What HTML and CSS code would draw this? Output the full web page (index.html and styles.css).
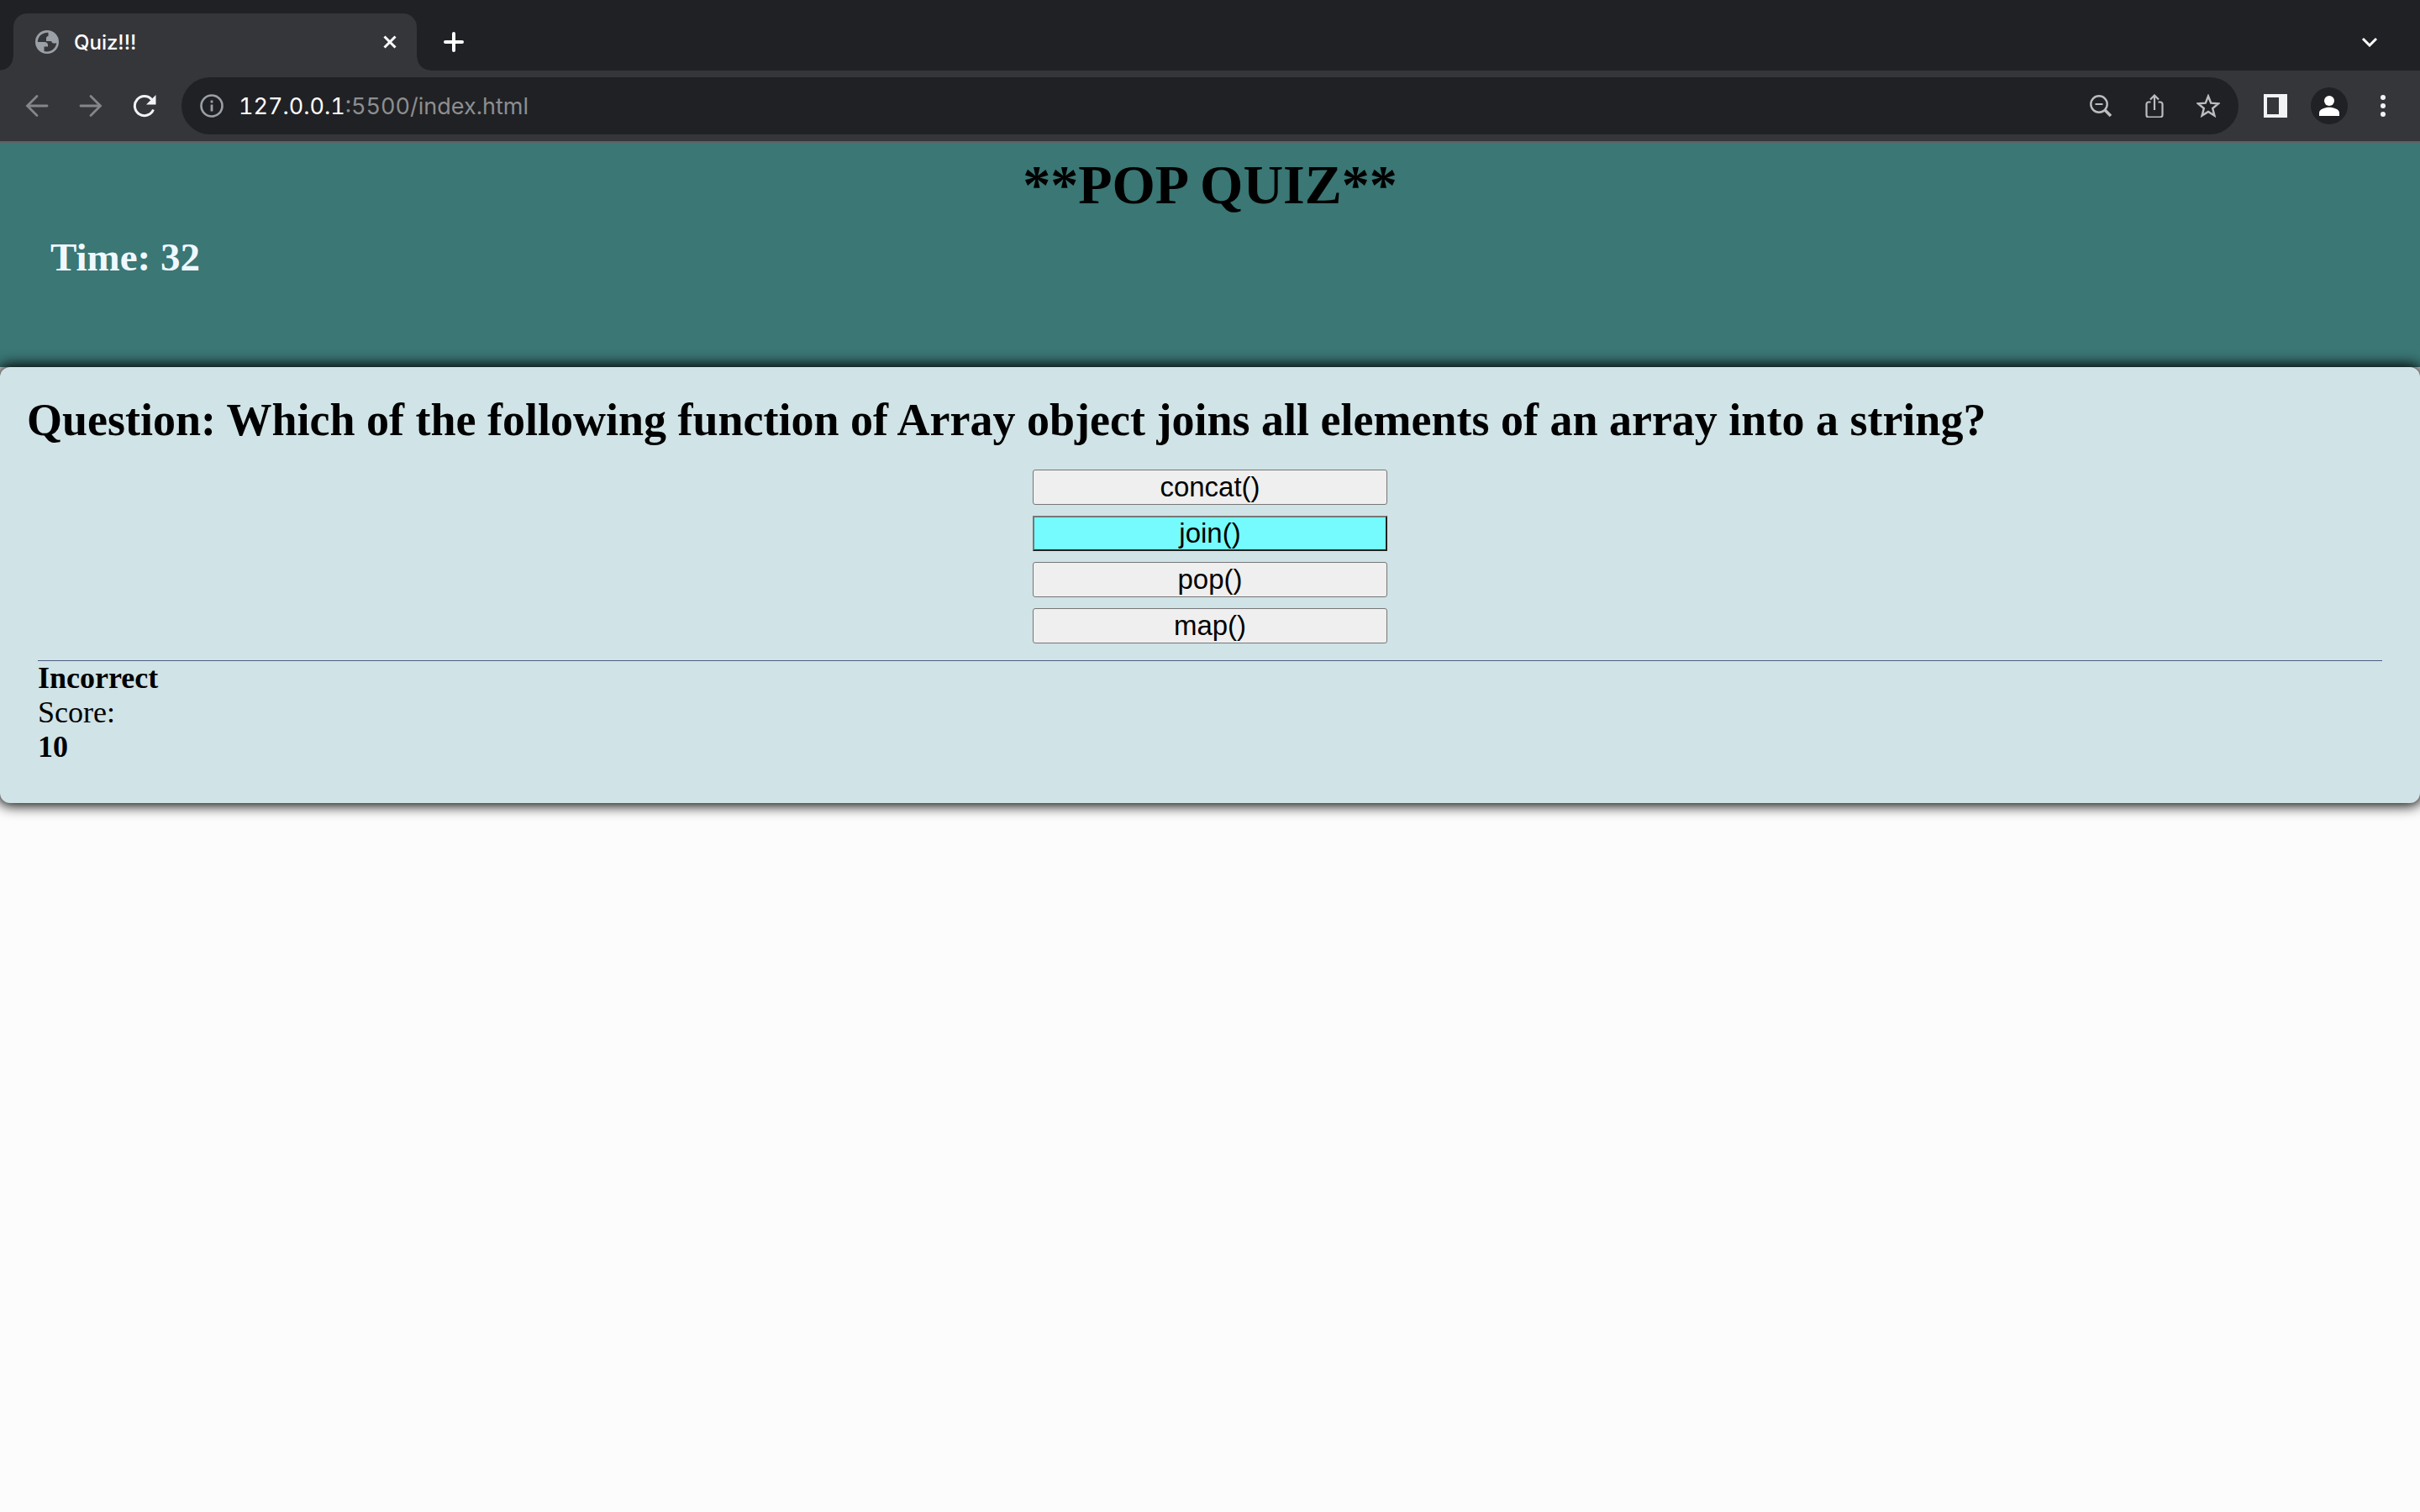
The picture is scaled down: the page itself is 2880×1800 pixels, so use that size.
FILE: index.html
```html
<!DOCTYPE html>
<html lang="en">
<head>
<meta charset="utf-8">
<title>Quiz!!!</title>
<link rel="stylesheet" href="styles.css">
</head>
<body>
<div class="browser">
  <div class="tab-strip">
    <div class="tab">
      <svg class="favicon" viewBox="0 0 28 28" aria-hidden="true"><circle cx="14" cy="14" r="14" fill="#9aa0a6"/><path d="M15.500 2.900C10 2.500 4 6 2.900 12.500V14H11c2.500 0 4 1.500 4 3.500v2h-4.500V25c6 1.800 14-2 14.800-10-1 .5-2 .8-3.300.6-2-.3-2.500-1.300-2.800-2.600H13V9.500c0-1.500 1-2.500 2.500-2.500z" fill="#35363a"/></svg>
      <span class="tab-title">Quiz!!!</span>
      <button class="tab-close" aria-label="Close tab"><svg viewBox="0 0 16 16"><path d="M1.500 1.500l13 13M14.500 1.500l-13 13" stroke="#fff" stroke-width="3"/></svg></button>
    </div>
    <button class="new-tab" aria-label="New tab"><svg viewBox="0 0 24 24"><path d="M12 2v20M2 12h20" stroke="#fff" stroke-width="4" stroke-linecap="round"/></svg></button>
    <button class="tab-search" aria-label="Search tabs"><svg viewBox="0 0 20 12"><path d="M2 2l8 8 8-8" fill="none" stroke="#fff" stroke-width="3"/></svg></button>
  </div>
  <div class="toolbar">
    <button class="tool" aria-label="Back"><svg viewBox="0 0 28 28"><path d="M26 14H3M14 2.500L2.500 14 14 25.500" fill="none" stroke="#85868a" stroke-width="2.800" stroke-linecap="round"/></svg></button>
    <button class="tool" aria-label="Forward"><svg viewBox="0 0 28 28"><path d="M2 14h23M14 2.500L25.500 14 14 25.500" fill="none" stroke="#85868a" stroke-width="2.800" stroke-linecap="round"/></svg></button>
    <button class="tool tool-reload" aria-label="Reload"><svg viewBox="0 0 28 28"><path d="M24.500 18.500A11.500 11.500 0 1 1 22.500 6.500" fill="none" stroke="#f1f3f4" stroke-width="3"/><path d="M27.500 1v11.500H16z" fill="#f1f3f4"/></svg></button>
    <div class="omnibox">
      <svg class="icon" viewBox="0 0 28 28" aria-hidden="true"><circle cx="14" cy="14" r="12.500" fill="none" stroke="#9aa0a6" stroke-width="2.600"/><path d="M14 12.500V20.500M14 7.500v3" stroke="#9aa0a6" stroke-width="2.800"/></svg>
      <div class="url"><span class="host">127.0.0.1</span>:5500/index.html</div>
      <button class="action" aria-label="Zoom out"><svg viewBox="0 0 28 28"><circle cx="12" cy="12" r="9.700" fill="none" stroke="#bdbdbf" stroke-width="2.400"/><path d="M7.500 12h9" stroke="#bdbdbf" stroke-width="2"/><path d="M19 19l7 7" stroke="#bdbdbf" stroke-width="3.600"/></svg></button>
      <button class="action" aria-label="Share"><svg viewBox="0 0 28 28"><path d="M9.500 9.500H7a2.500 2.500 0 0 0-2.500 2.500v13A2.500 2.500 0 0 0 7 27.500h14a2.500 2.500 0 0 0 2.500-2.500V12A2.500 2.500 0 0 0 21 9.500h-2.500M14 19V2M9 6.500l5-5 5 5" fill="none" stroke="#bdbdbf" stroke-width="2.200"/></svg></button>
      <button class="action" aria-label="Bookmark"><svg viewBox="0 0 28 28"><path d="M14 2.500l3.200 8.200 8.800.6-6.800 5.700 2.200 8.600-7.400-4.700-7.400 4.700L8.800 17 2 11.300l8.800-.6z" fill="none" stroke="#bdbdbf" stroke-width="2.400"/></svg></button>
    </div>
    <button class="tool tool-panel" aria-label="Side panel"><svg viewBox="0 0 28 28"><path fill-rule="evenodd" d="M0 0h28v28H0zM4 4v20h14V4z" fill="#f1f3f4"/></svg></button>
    <button class="profile" aria-label="Profile"><svg viewBox="0 0 24 24"><circle cx="12" cy="6" r="6" fill="#fff"/><path d="M0 24v-3.500C0 16 7 13.800 12 13.800S24 16 24 20.500V24z" fill="#fff"/></svg></button>
    <button class="tool tool-menu" aria-label="Menu"><svg viewBox="0 0 28 28"><g fill="#f1f3f4"><circle cx="14" cy="4" r="3"/><circle cx="14" cy="14" r="3"/><circle cx="14" cy="24" r="3"/></g></svg></button>
  </div>
</div>
<header class="banner">
  <h1 class="title">**POP QUIZ**</h1>
  <p class="timer">Time: 32</p>
</header>
<main class="card">
  <h2 class="question">Question: Which of the following function of Array object joins all elements of an array into a string?</h2>
  <div class="choices">
    <button class="choice">concat()</button>
    <button class="choice choice-active">join()</button>
    <button class="choice">pop()</button>
    <button class="choice">map()</button>
  </div>
  <div class="result">
    <p class="strong">Incorrect</p>
    <p>Score:</p>
    <p class="strong">10</p>
  </div>
</main>
</body>
</html>
```
FILE: styles.css
```css
* { box-sizing: border-box; }
body {
  min-height: 100vh;
  margin: 0;
  background: #fcfcfc;
  color: #000;
  font-family: "Liberation Serif", "Times New Roman", serif;
}
h1, h2, p { margin: 0; }
button { font: inherit; }
svg { display: block; }

.browser {
  background: #35363a;
  border-bottom: 2px solid #5f6064;
  font-family: Inter, sans-serif;
}
.browser button {
  display: flex;
  align-items: center;
  justify-content: center;
  flex: none;
  padding: 0;
  border: 0;
  background: none;
}
.tab-strip {
  display: flex;
  align-items: center;
  height: 84px;
  padding: 16px 50px 0 16px;
  background: #202124;
}
.tab {
  position: relative;
  display: flex;
  align-items: center;
  width: 480px;
  height: 68px;
  padding: 0 24px 0 26px;
  border-radius: 16px 16px 0 0;
  background: #35363a;
}
.tab::before, .tab::after {
  content: "";
  position: absolute;
  bottom: 0;
  width: 16px;
  height: 16px;
}
.tab::before { left: -16px; background: radial-gradient(circle at 0 0, #202124 15px, #35363a 16px); }
.tab::after { right: -16px; background: radial-gradient(circle at 100% 0, #202124 15px, #35363a 16px); }
.favicon { width: 28px; height: 28px; }
.tab-title { flex: 1; margin-left: 18px; color: #fff; font-size: 24px; font-weight: 500; }
.tab-close svg { width: 16px; height: 16px; }
.new-tab { margin-left: 32px; }
.new-tab svg { width: 24px; height: 24px; }
.browser .tab-search { margin-left: auto; }
.tab-search svg { width: 20px; height: 12px; }

.toolbar {
  display: flex;
  align-items: center;
  height: 84px;
  padding: 0 30px;
}
.tool { margin-right: 36px; }
.tool svg { width: 28px; height: 28px; }
.tool-reload { margin-right: 30px; }
.omnibox {
  display: flex;
  align-items: center;
  flex: 1;
  gap: 36px;
  height: 68px;
  margin-right: 30px;
  padding: 0 22px;
  border-radius: 34px;
  background: #202124;
}
.icon { width: 28px; height: 28px; margin-right: -18px; }
.url { flex: 1; color: #8d8e90; font-size: 27px; font-variant-numeric: tabular-nums; }
.host { color: #fff; }
.action svg { width: 28px; height: 28px; }
.tool-panel { margin-right: 28px; }
.browser .profile {
  width: 44px;
  height: 44px;
  margin-right: 28px;
  border-radius: 50%;
  background: #202124;
}
.profile svg { width: 24px; height: 24px; }
.tool-menu { margin-right: 0; }

.banner {
  height: 267px;
  padding: 12px 60px;
  background: #3a7775;
}
.title { text-align: center; font-size: 66px; line-height: 76px; }
.timer { margin-top: 20px; color: #f0f8ff; font-size: 47px; line-height: 56px; font-weight: bold; }

.card {
  position: relative;
  padding: 29px 45px 46px;
  border-radius: 12px;
  background: #d0e3e6;
  box-shadow: 0 0 16px 3px #000;
  clip-path: inset(-30px 0);
}
.question { margin-left: -13px; font-size: 54px; line-height: 68px; }
.choices {
  display: flex;
  flex-direction: column;
  align-items: center;
  gap: 13px;
  padding: 25px 0 20px;
}
.choice {
  width: 422px;
  height: 42px;
  padding: 0;
  border: 1px solid #767676;
  border-radius: 3px;
  background: #efefef;
  color: #000;
  font: 33px/38px "Liberation Sans", Arial, sans-serif;
}
.choice-active {
  border: 2px solid;
  border-color: #767676 #222 #222 #767676;
  border-radius: 0;
  background: #75fbfd;
}
.result {
  border-top: 1px solid #4d5c83;
  font-size: 36px;
  line-height: 41px;
}
.strong { font-weight: bold; }
```
